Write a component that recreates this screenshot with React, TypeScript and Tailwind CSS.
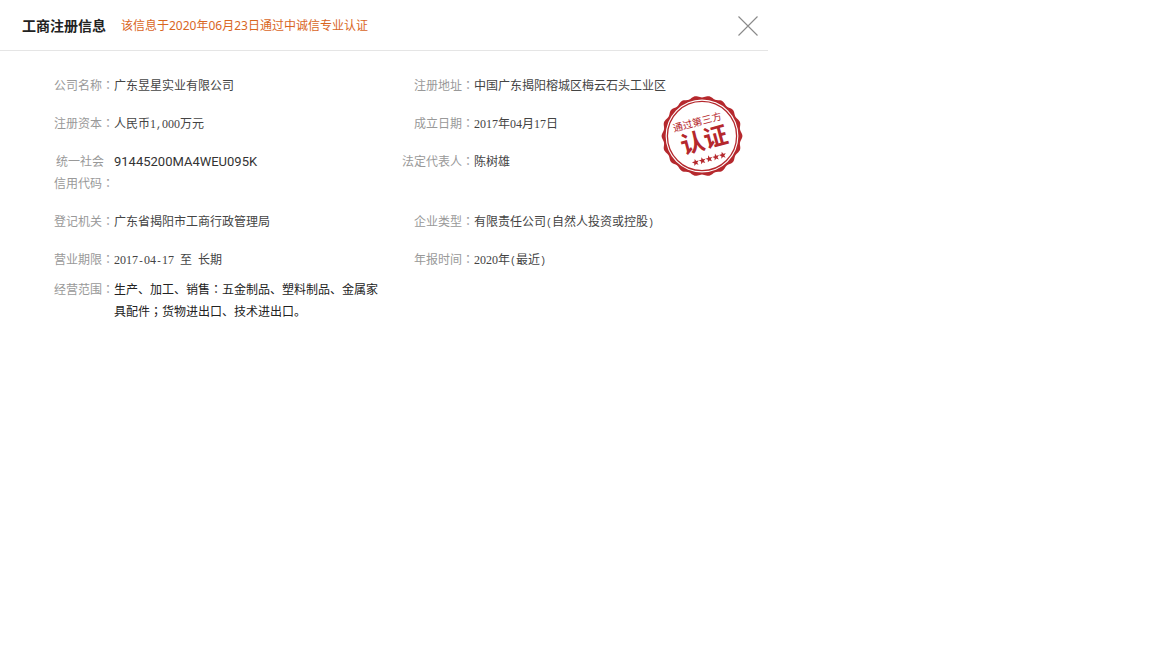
import React from 'react';

const SANS = "font-['Noto_Sans','Noto_Sans_CJK_SC',sans-serif]";

type Field = { label: string[]; value: string; tone?: 'song' | 'dark' | 'code' };

function Glyphs({ text, song }: { text: string; song?: boolean }) {
  const parts = text.split(song ? /(\d+|[\x20-\x2f]+|[：；])/ : /([：；])/);
  return (
    <>
      {parts.map((part, i) => {
        if (/^[：；]$/.test(part)) {
          return (
            <span key={i} className="inline-block font-['Noto_Sans_CJK_TC',sans-serif] leading-none" lang="zh-Hant">
              {part}
            </span>
          );
        }
        if (song && /^\d+$/.test(part)) {
          return <span key={i} className="font-['Liberation_Serif',serif]">{part}</span>;
        }
        if (song && /^[\x20-\x2f]+$/.test(part)) {
          return <span key={i} className="font-['Liberation_Mono',monospace] text-[10px] leading-none">{part}</span>;
        }
        return <React.Fragment key={i}>{part}</React.Fragment>;
      })}
    </>
  );
}

const tones = {
  song: 'whitespace-pre text-[#444]',
  dark: 'text-[#222]',
  code: "font-['Roboto',sans-serif] text-[13px] text-[#333]",
};

function Item({ field, labelWidth }: { field?: Field; labelWidth: string }) {
  if (!field) return <div />;
  const tone = field.tone ?? 'song';
  return (
    <div className="flex">
      <dt className={`${labelWidth} shrink-0 text-right text-[#999]`}>
        {field.label.map((line, i) => (
          <span key={line} className={i < field.label.length - 1 ? 'block pr-2.5' : 'block'}>
            <Glyphs text={line} />
          </span>
        ))}
      </dt>
      <dd className={tones[tone]}>
        <Glyphs text={field.value} song={tone === 'song'} />
      </dd>
    </div>
  );
}

const rows: [Field, Field?][] = [
  [
    { label: ['公司名称：'], value: '广东昱星实业有限公司' },
    { label: ['注册地址：'], value: '中国广东揭阳榕城区梅云石头工业区' },
  ],
  [
    { label: ['注册资本：'], value: '人民币1,000万元' },
    { label: ['成立日期：'], value: '2017年04月17日' },
  ],
  [
    { label: ['统一社会', '信用代码：'], value: '91445200MA4WEU095K', tone: 'code' },
    { label: ['法定代表人：'], value: '陈树雄' },
  ],
  [
    { label: ['登记机关：'], value: '广东省揭阳市工商行政管理局' },
    { label: ['企业类型：'], value: '有限责任公司(自然人投资或控股)' },
  ],
  [
    { label: ['营业期限：'], value: '2017-04-17 至 长期' },
    { label: ['年报时间：'], value: '2020年(最近)' },
  ],
];

const scope: Field = {
  label: ['经营范围：'],
  value: '生产、加工、销售：五金制品、塑料制品、金属家具配件；货物进出口、技术进出口。',
  tone: 'dark',
};

function wavyCircle(radius: number, depth: number, lobes: number) {
  const points: string[] = [];
  for (let i = 0; i < 240; i++) {
    const a = (i / 240) * Math.PI * 2;
    const r = radius + depth * Math.cos(a * lobes);
    points.push(`${(r * Math.cos(a)).toFixed(2)} ${(r * Math.sin(a)).toFixed(2)}`);
  }
  return `M${points.join('L')}Z`;
}

function star(cx: number, cy: number, r: number) {
  const points: string[] = [];
  for (let i = 0; i < 10; i++) {
    const a = (i * Math.PI) / 5 - Math.PI / 2;
    const d = i % 2 ? r * 0.42 : r;
    points.push(`${(cx + d * Math.cos(a)).toFixed(2)},${(cy + d * Math.sin(a)).toFixed(2)}`);
  }
  return points.join(' ');
}

function Seal() {
  return (
    <svg viewBox="-41 -41 82 82" className="absolute top-[95px] left-[661px] size-[82px]" role="img" aria-label="通过第三方认证">
      <path d={wavyCircle(39.5, 0.9, 18)} fill="#b5282d" />
      <circle r="36.4" fill="#fff" />
      <circle r="34.6" fill="none" stroke="#b5282d" strokeWidth="1.3" />
      <g transform="rotate(-15)" fill="#b5282d" textAnchor="middle" className="font-['Noto_Sans_CJK_SC',sans-serif]">
        <text x="-1" y="-11" fontSize="10">通过第三方</text>
        <text x="1" y="13" fontSize="24" fontWeight="700">认证</text>
        {[-14, -7, 0, 7, 14].map((x) => (
          <polygon key={x} points={star(x + 1, 24, 3.7)} />
        ))}
      </g>
    </svg>
  );
}

export default function App() {
  return (
    <main className={`${SANS} min-h-screen bg-white text-xs leading-[22px]`}>
      <section className="relative max-w-3xl" aria-labelledby="title">
        <header className="flex items-center border-b border-[#e5e5e5] pt-[15px] pr-2.5 pb-[13px] pl-[22px]">
          <h1 id="title" className="text-sm leading-[22px] font-bold text-[#222]">工商注册信息</h1>
          <p className="ml-[15px] text-[#d9661f]">该信息于2020年06月23日通过中诚信专业认证</p>
          <button type="button" aria-label="关闭" className="ml-auto cursor-pointer">
            <svg viewBox="0 0 20 20" className="size-5" stroke="#8a8a8a" strokeWidth="1.1">
              <path d="M0.5 0.5L19.5 19.5M19.5 0.5L0.5 19.5" />
            </svg>
          </button>
        </header>
        <dl className="pt-6">
          {rows.map(([left, right]) => (
            <div key={left.value} className="grid grid-cols-[380px_1fr] pb-4">
              <Item field={left} labelWidth="w-[114px]" />
              <Item field={right} labelWidth="w-[94px]" />
            </div>
          ))}
          <div className="-mt-2 grid grid-cols-[380px_1fr]">
            <Item field={scope} labelWidth="w-[114px]" />
          </div>
        </dl>
        <Seal />
      </section>
    </main>
  );
}
